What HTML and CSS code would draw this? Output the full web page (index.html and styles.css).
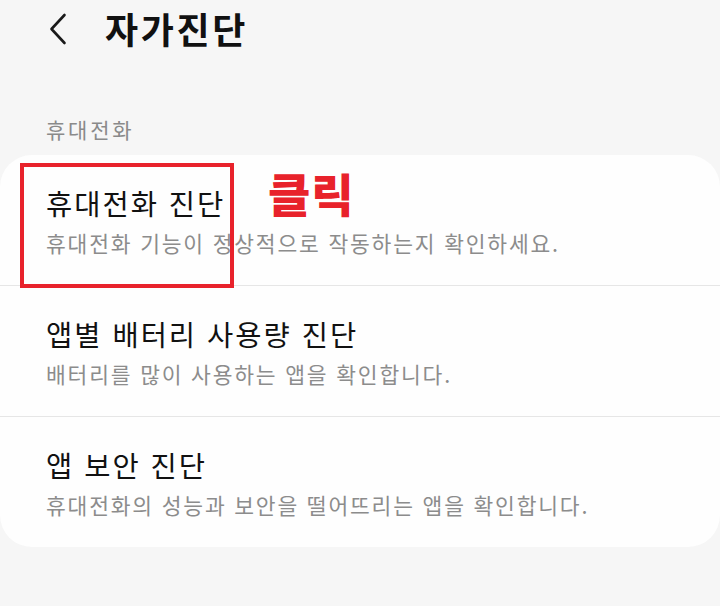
FILE: index.html
```html
<!DOCTYPE html>
<html lang="ko">
<head>
<meta charset="utf-8">
<link rel="stylesheet" href="styles.css">
</head>
<body>
<div class="page">
  <header class="header">
    <svg class="back" width="22" height="34" viewBox="0 0 22 34" aria-hidden="true">
      <path d="M17.5 3 L4.5 17 L17.5 31" fill="none" stroke="#1a1a1a" stroke-width="2.6" stroke-linecap="round" stroke-linejoin="round"/>
    </svg>
    <h1 class="title">자가진단</h1>
  </header>
  <div class="section-label">휴대전화</div>
  <div class="card">
    <div class="row">
      <div class="row-title">휴대전화 진단</div>
      <div class="row-sub">휴대전화 기능이 정상적으로 작동하는지 확인하세요.</div>
    </div>
    <div class="row">
      <div class="row-title">앱별 배터리 사용량 진단</div>
      <div class="row-sub">배터리를 많이 사용하는 앱을 확인합니다.</div>
    </div>
    <div class="row row-last">
      <div class="row-title">앱 보안 진단</div>
      <div class="row-sub">휴대전화의 성능과 보안을 떨어뜨리는 앱을 확인합니다.</div>
    </div>
    <div class="highlight-box"></div>
    <div class="click-label">클릭</div>
  </div>
</div>
</body>
</html>
```

FILE: styles.css
```css
html, body {
  margin: 0;
  padding: 0;
}
body {
  background: #f6f6f6;
  font-family: "Noto Sans CJK KR", "Noto Sans", sans-serif;
  width: 720px;
  height: 606px;
  overflow: hidden;
}
.page {
  display: flex;
  flex-direction: column;
}
.header {
  height: 57px;
  display: flex;
  align-items: center;
  padding-left: 47px;
}
.back {
  display: block;
  margin-right: 36px;
}
.title {
  margin: 0;
  font-size: 36px;
  font-weight: 700;
  color: #111;
  line-height: 57px;
  letter-spacing: 2.6px;
}
.section-label {
  margin-top: 57px;
  padding-left: 46px;
  font-size: 21px;
  line-height: 30px;
  color: #8a8a8a;
  letter-spacing: 2.8px;
}
.card {
  position: relative;
  margin-top: 11px;
  background: #fefefe;
  border-radius: 32px;
}
.row {
  height: 131px;
  box-sizing: border-box;
  padding: 28px 0 0 46px;
  border-bottom: 1.5px solid #e6e6e6;
}
.row-last {
  border-bottom: none;
  height: 130px;
}
.row-title {
  font-size: 28.5px;
  line-height: 40px;
  color: #111;
  letter-spacing: 2px;
}
.row-sub {
  font-size: 21.5px;
  line-height: 40px;
  color: #8c8c8c;
  letter-spacing: 1.8px;
}
.highlight-box {
  position: absolute;
  left: 20px;
  top: 8px;
  width: 214px;
  height: 125px;
  box-sizing: border-box;
  border: 4.5px solid #e8222b;
}
.click-label {
  position: absolute;
  left: 268px;
  top: 9px;
  font-size: 46px;
  line-height: 56px;
  font-weight: 900;
  color: #e8222b;
  letter-spacing: 1px;
}
```
